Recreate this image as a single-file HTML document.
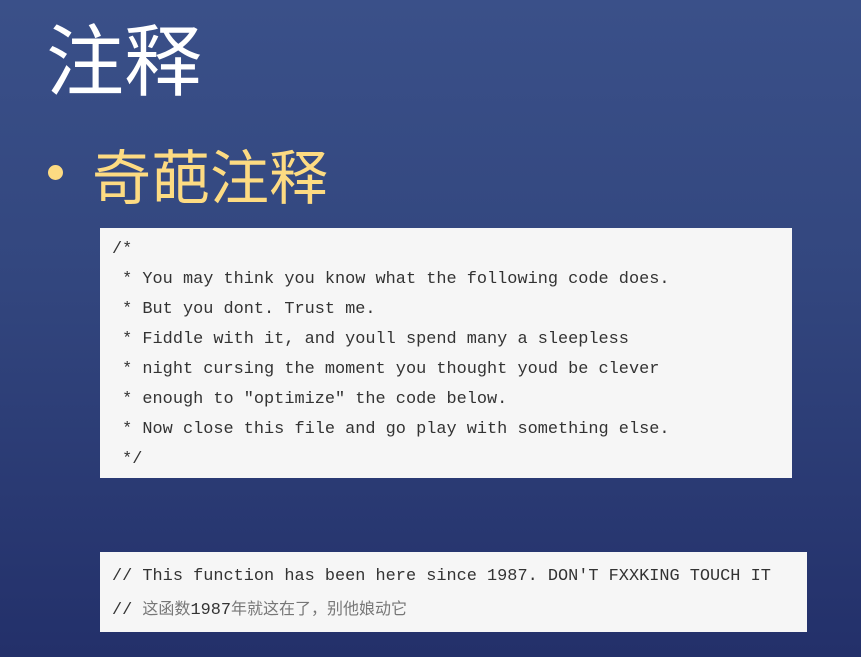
<!DOCTYPE html>
<html><head><meta charset="utf-8"><style>
html,body{margin:0;padding:0}
body{width:861px;height:657px;overflow:hidden;position:relative;background:linear-gradient(180deg,#3a5089 0%,#33477f 40%,#23306a 100%);font-family:"Liberation Sans","Noto Sans CJK SC",sans-serif}
.t{position:absolute;left:46px;top:6px;font-size:78px;color:#fff;line-height:100px;font-family:"Noto Sans CJK SC",sans-serif}
.s{position:absolute;left:92px;top:134px;font-size:59px;color:#fddb82;line-height:80px;font-family:"Noto Sans CJK SC",sans-serif}
.dot{position:absolute;left:48px;top:165px;width:15px;height:15px;border-radius:50%;background:#fddb82}
.box{position:absolute;background:#f6f6f6;font-family:"Liberation Mono","Noto Sans CJK SC",monospace;font-size:16.9px;color:#333;white-space:pre;line-height:30px}
.b1{left:100px;top:228px;width:680px;height:243px;padding:7px 0 0 12px}
.b2{left:100px;top:552px;width:695px;height:70px;padding:10px 0 0 12px;line-height:30px}
.b2 div{height:30px}
.cn{color:#777;font-family:"Noto Sans CJK SC",sans-serif;font-size:16px}
</style></head><body>
<div class="t">注释</div>
<div class="dot"></div>
<div class="s">奇葩注释</div>
<div class="box b1">/*
 * You may think you know what the following code does.
 * But you dont. Trust me.
 * Fiddle with it, and youll spend many a sleepless
 * night cursing the moment you thought youd be clever
 * enough to "optimize" the code below.
 * Now close this file and go play with something else.
 */</div>
<div class="box b2"><div>// This function has been here since 1987. DON'T FXXKING TOUCH IT</div><div>// <span class="cn">这函数</span>1987<span class="cn">年就这在了，别他娘动它</span></div></div>
</body></html>
